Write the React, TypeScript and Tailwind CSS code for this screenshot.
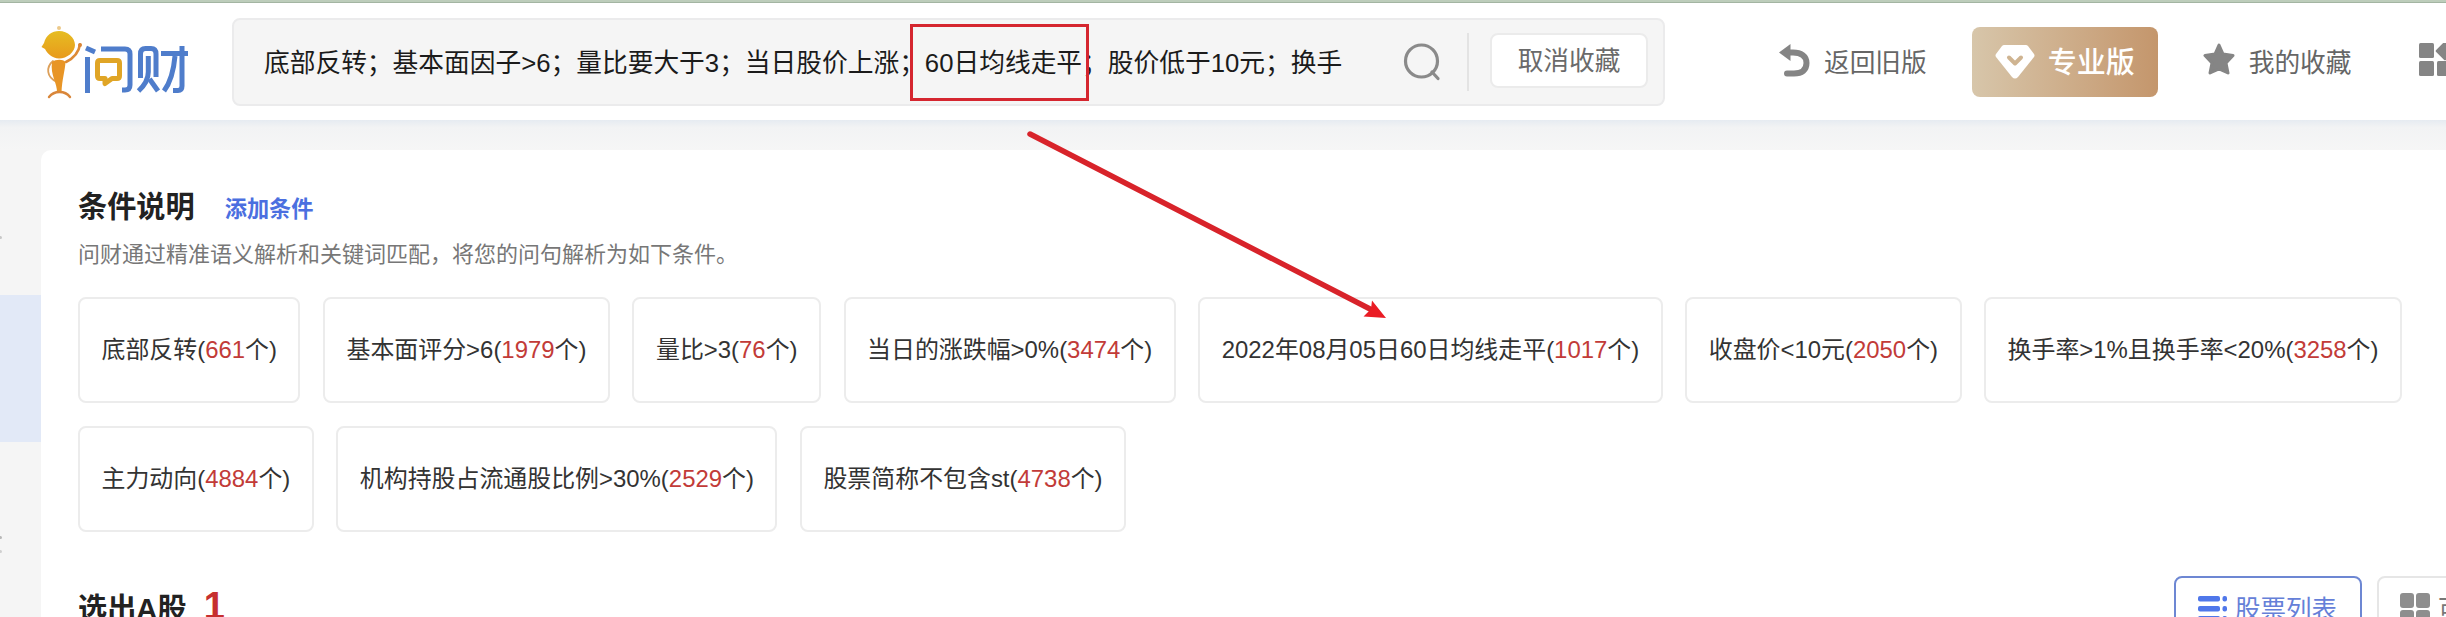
import type { ReactNode } from 'react';

interface Condition {
  label: string;
  count: number;
}

const CONDITIONS: Condition[][] = [
  [
    { label: '底部反转', count: 661 },
    { label: '基本面评分>6', count: 1979 },
    { label: '量比>3', count: 76 },
    { label: '当日的涨跌幅>0%', count: 3474 },
    { label: '2022年08月05日60日均线走平', count: 1017 },
    { label: '收盘价<10元', count: 2050 },
    { label: '换手率>1%且换手率<20%', count: 3258 },
  ],
  [
    { label: '主力动向', count: 4884 },
    { label: '机构持股占流通股比例>30%', count: 2529 },
    { label: '股票简称不包含st', count: 4738 },
  ],
];

function Logo() {
  return (
    <svg className="mt-[3px] shrink-0" width="150" height="76" viewBox="40 24 150 76" fill="none">
      <defs>
        <linearGradient id="head" x1="0" y1="0" x2="0" y2="1">
          <stop offset="0" stopColor="#e6bd22" />
          <stop offset="1" stopColor="#e89a1c" />
        </linearGradient>
      </defs>
      {/* mascot */}
      <circle cx="59" cy="27" r="2" fill="#ecc98a" />
      <path d="M59 30C68 30 75 37 75 44C75 51 67 57.500 59 57.500C52 57.500 47 52 45 48L41.500 46L44 42C46 34 52 30 59 30Z" fill="url(#head)" />
      <path d="M80 43.500C79 50 76 56 66 61" stroke="#dd8a35" strokeWidth="2.600" strokeLinecap="round" />
      <circle cx="80" cy="44" r="2" fill="#d98435" />
      <path d="M53 60C46 66 46 76 57 81" stroke="#dda05a" strokeWidth="1.800" strokeLinecap="round" />
      <path d="M52 61C56 58 63 58 65.500 61C65 70 62 78 61.500 92H57C57.500 82 50 74 52 61Z" fill="#e89526" />
      <path d="M49 96C53 91 57 91 59.500 91C63 91 67 92 70 96" stroke="#d9863a" strokeWidth="2.400" strokeLinecap="round" />
      {/* wordmark */}
      <g stroke="#4f7dcb" strokeWidth="5" strokeLinejoin="round">
        <path d="M86 47L95 51" />
        <path d="M87.500 56V92" />
        <path d="M101 48H125Q130 48 130 53V84Q130 89 125 89H122" />
        <path d="M140.500 77V53Q140.500 47.500 145.500 47.500H151Q156 47.500 156 53V76" />
        <path d="M148.300 55V71Q148.300 81 138.500 90" />
        <path d="M149.500 78L158 90" />
        <path d="M161 52.500H188" />
        <path d="M182 45V85Q182 89.500 178 89.500H173" />
        <path d="M175 55Q173 78 164 90" />
      </g>
      <path d="M100 59.500H117Q119.500 59.500 119.500 62V75Q119.500 77.500 117 77.500H112L105 82.500V77.500H100Q97.500 77.500 97.500 75V62Q97.500 59.500 100 59.500Z" stroke="#e0a526" strokeWidth="5" strokeLinejoin="round" />
    </svg>
  );
}

function SearchBar() {
  return (
    <div className="relative ml-[42px] flex h-[88px] w-[1433px] shrink-0 items-center rounded-lg border-2 border-[#ebebec] bg-[#f5f5f5]">
      <div className="mt-[3px] ml-[30px] w-[1110px] shrink-0 whitespace-nowrap text-[25.73px] text-[#1b1b1b]">
        底部反转；基本面因子&gt;6；量比要大于3；当日股价上涨；60日均线走平；股价低于10元；换手
      </div>
      <svg className="ml-[29px] shrink-0" width="38" height="38" viewBox="0 0 38 38" fill="none" stroke="#8a8a8a" strokeWidth="3.200">
        <circle cx="18.500" cy="18" r="16" />
        <path d="M29 29L35 35.500" strokeLinecap="round" />
      </svg>
      <div className="ml-[26px] h-[58px] w-[2px] bg-[#e3e3e3]" />
      <button className="mb-[3px] ml-[21px] h-[55px] w-[158px] rounded-lg border-2 border-[#ebebeb] bg-white pt-[2px] text-[25.7px] text-[#6a6a6a]">
        取消收藏
      </button>
      {/* highlight around the 60-day average condition */}
      <div className="absolute left-[676px] top-[4px] h-[77px] w-[179px] border-[3px] border-[#d5262f]" />
    </div>
  );
}

function Header() {
  return (
    <header className="flex h-[117px] shrink-0 items-center bg-white pl-[40px] text-[25.7px] text-[#666]">
      <Logo />
      <SearchBar />
      <a className="ml-[114px] flex shrink-0 items-center">
        <svg width="31" height="34" viewBox="0 0 31 34" fill="none">
          <path d="M0 8.500L11.500 0V17Z" fill="#858585" />
          <path d="M8 8.500H14C22 8.500 27.500 12 27.500 19C27.500 26 23 29.500 15 29.500H8" stroke="#858585" strokeWidth="6" strokeLinecap="round" />
        </svg>
        <span className="mt-[3px] ml-[14px]">返回旧版</span>
      </a>
      <a className="ml-[45px] flex h-[70px] w-[186px] shrink-0 items-center rounded-lg bg-linear-to-r from-[#d7c6aa] to-[#c4966c] pl-[23px] text-[29px] font-medium text-white">
        <svg width="40" height="34" viewBox="0 0 40 34">
          <path d="M9 0H31Q32 0 33 1L39 9Q40 10.500 39 12L23 32Q20 35 17 32L1 12Q0 10.500 1 9L7 1Q8 0 9 0Z" fill="#fff" />
          <path d="M14 12.500L20 18.500L26 12.500" stroke="#cfb491" strokeWidth="4" strokeLinecap="round" strokeLinejoin="round" fill="none" />
        </svg>
        <span className="mt-[4px] ml-[13px]">专业版</span>
      </a>
      <a className="ml-[45px] flex shrink-0 items-center">
        <svg className="mb-[4px]" width="32" height="33" viewBox="0 0 32 33">
          <path d="M16 2L20 11L30 12.500L23 20L25 30L16 26L7 30L9 20L2 12.500L12 11Z" fill="#858585" stroke="#858585" strokeWidth="3" strokeLinejoin="round" />
        </svg>
        <span className="mt-[3px] ml-[14px]">我的收藏</span>
      </a>
      <svg className="mb-[3px] ml-[67px] shrink-0" width="34" height="34" viewBox="0 0 34 34" fill="#858585">
        <rect x="0" y="0" width="15" height="15" rx="1.500" />
        <rect x="0" y="18" width="15" height="15" rx="1.500" />
        <rect x="18" y="18" width="15" height="15" rx="1.500" />
        <rect x="19" y="1" width="14" height="14" rx="1.500" transform="rotate(45 26 8)" />
      </svg>
    </header>
  );
}

function ConditionCard({ label, count }: Condition) {
  return (
    <div className="flex h-[106px] shrink-0 items-center rounded-lg border-2 border-[#ececec] px-[21.5px] text-[23.93px] whitespace-nowrap text-[#333]">
      {label}(<span className="text-[#c23b38]">{count}</span>个)
    </div>
  );
}

function ViewButton({ active, icon, children }: { active?: boolean; icon: ReactNode; children: ReactNode }) {
  return (
    <button
      className={
        active
          ? 'flex h-[66px] w-[188px] shrink-0 items-center rounded-lg border-2 border-[#6d87d3] pl-[22px] text-[25.5px] text-[#6580d8]'
          : 'flex h-[66px] w-[188px] shrink-0 items-center rounded-lg border-2 border-[#e6e6e6] pl-[21px] text-[25.5px] text-[#777]'
      }
    >
      {icon}
      <span className="ml-[8px] whitespace-nowrap">{children}</span>
    </button>
  );
}

function ListIcon() {
  return (
    <svg className="shrink-0" width="29" height="26" viewBox="0 0 29 26" fill="#4f77ea">
      {[0, 10, 20].map((y) => (
        <g key={y}>
          <rect x="0" y={y} width="22" height="5.500" rx="2" />
          <rect x="24.500" y={y} width="4.500" height="5.500" rx="2" />
        </g>
      ))}
    </svg>
  );
}

function GridIcon() {
  return (
    <svg className="shrink-0" width="30" height="32" viewBox="0 0 30 32" fill="#8e8e8e">
      <rect x="0" y="0" width="14" height="15" rx="3" />
      <rect x="16" y="0" width="14" height="15" rx="3" />
      <rect x="0" y="17" width="14" height="15" rx="3" />
      <rect x="16" y="17" width="14" height="15" rx="3" />
    </svg>
  );
}

export default function App() {
  return (
    <div className="relative flex h-[617px] w-[2446px] flex-col overflow-hidden bg-[#f5f5f5] font-['Liberation_Sans','Noto_Sans_CJK_SC',sans-serif]">
      <div className="h-[3px] shrink-0 border-b border-[#a3b5a2] bg-[#bdcdbb]" />
      <Header />
      <div className="h-[30px] shrink-0 bg-linear-to-b from-[#e6ebf1] via-[#f2f3f4] via-25% to-[#f6f6f6]" />
      <div className="flex min-h-0 flex-1">
        <aside className="w-[41px] shrink-0 pt-[86px]">
          <div className="h-[3px] w-[2px] rounded-r bg-[#c8c8c8]" />
          <div className="mt-[56px] h-[147px] bg-[#e2e9f7]" />
          <div className="mt-[94px] h-[3px] w-[2px] rounded-r bg-[#b8b8b8]" />
          <div className="mt-[11px] h-[3px] w-[2px] rounded-r bg-[#d0d0d0]" />
        </aside>
        <main className="-mr-4 min-w-0 flex-1 rounded-tl-[10px] bg-white pl-[37px]">
          <div className="flex h-[79px] items-end">
            <h2 className="text-[29.2px] leading-[44px] font-bold text-[#222]">条件说明</h2>
            <a className="ml-[30px] text-[22.2px] leading-[38px] font-bold text-[#4b6fe0]">添加条件</a>
          </div>
          <p className="mt-[9px] text-[22px] leading-[34px] text-[#777]">
            问财通过精准语义解析和关键词匹配，将您的问句解析为如下条件。
          </p>
          <div className="mt-[25px] flex flex-col gap-[23px]">
            {CONDITIONS.map((row, i) => (
              <div key={i} className="flex gap-[22.5px]">
                {row.map((c) => (
                  <ConditionCard key={c.label} {...c} />
                ))}
              </div>
            ))}
          </div>
          <div className="mt-[44px] flex items-start">
            <h2 className="mt-[11px] text-[29.2px] leading-[44px] font-bold whitespace-nowrap text-[#222]">选出A股</h2>
            <span className="mt-[8px] ml-[17px] text-[38px] leading-[44px] font-bold text-[#c62f2f]">1</span>
            <div className="ml-auto flex w-[288px] shrink-0 gap-[15px]">
              <ViewButton active icon={<ListIcon />}>股票列表</ViewButton>
              <ViewButton icon={<GridIcon />}>可视化</ViewButton>
            </div>
          </div>
        </main>
      </div>
      <svg className="pointer-events-none absolute top-0 left-0" width="1400" height="340" fill="none">
        <path d="M1030 134L1372 310" stroke="#d8232a" strokeWidth="5.500" strokeLinecap="round" />
        <path d="M1386 318L1372 300.500L1371 309L1363.500 316.500Z" fill="#ea1c24" />
      </svg>
    </div>
  );
}
